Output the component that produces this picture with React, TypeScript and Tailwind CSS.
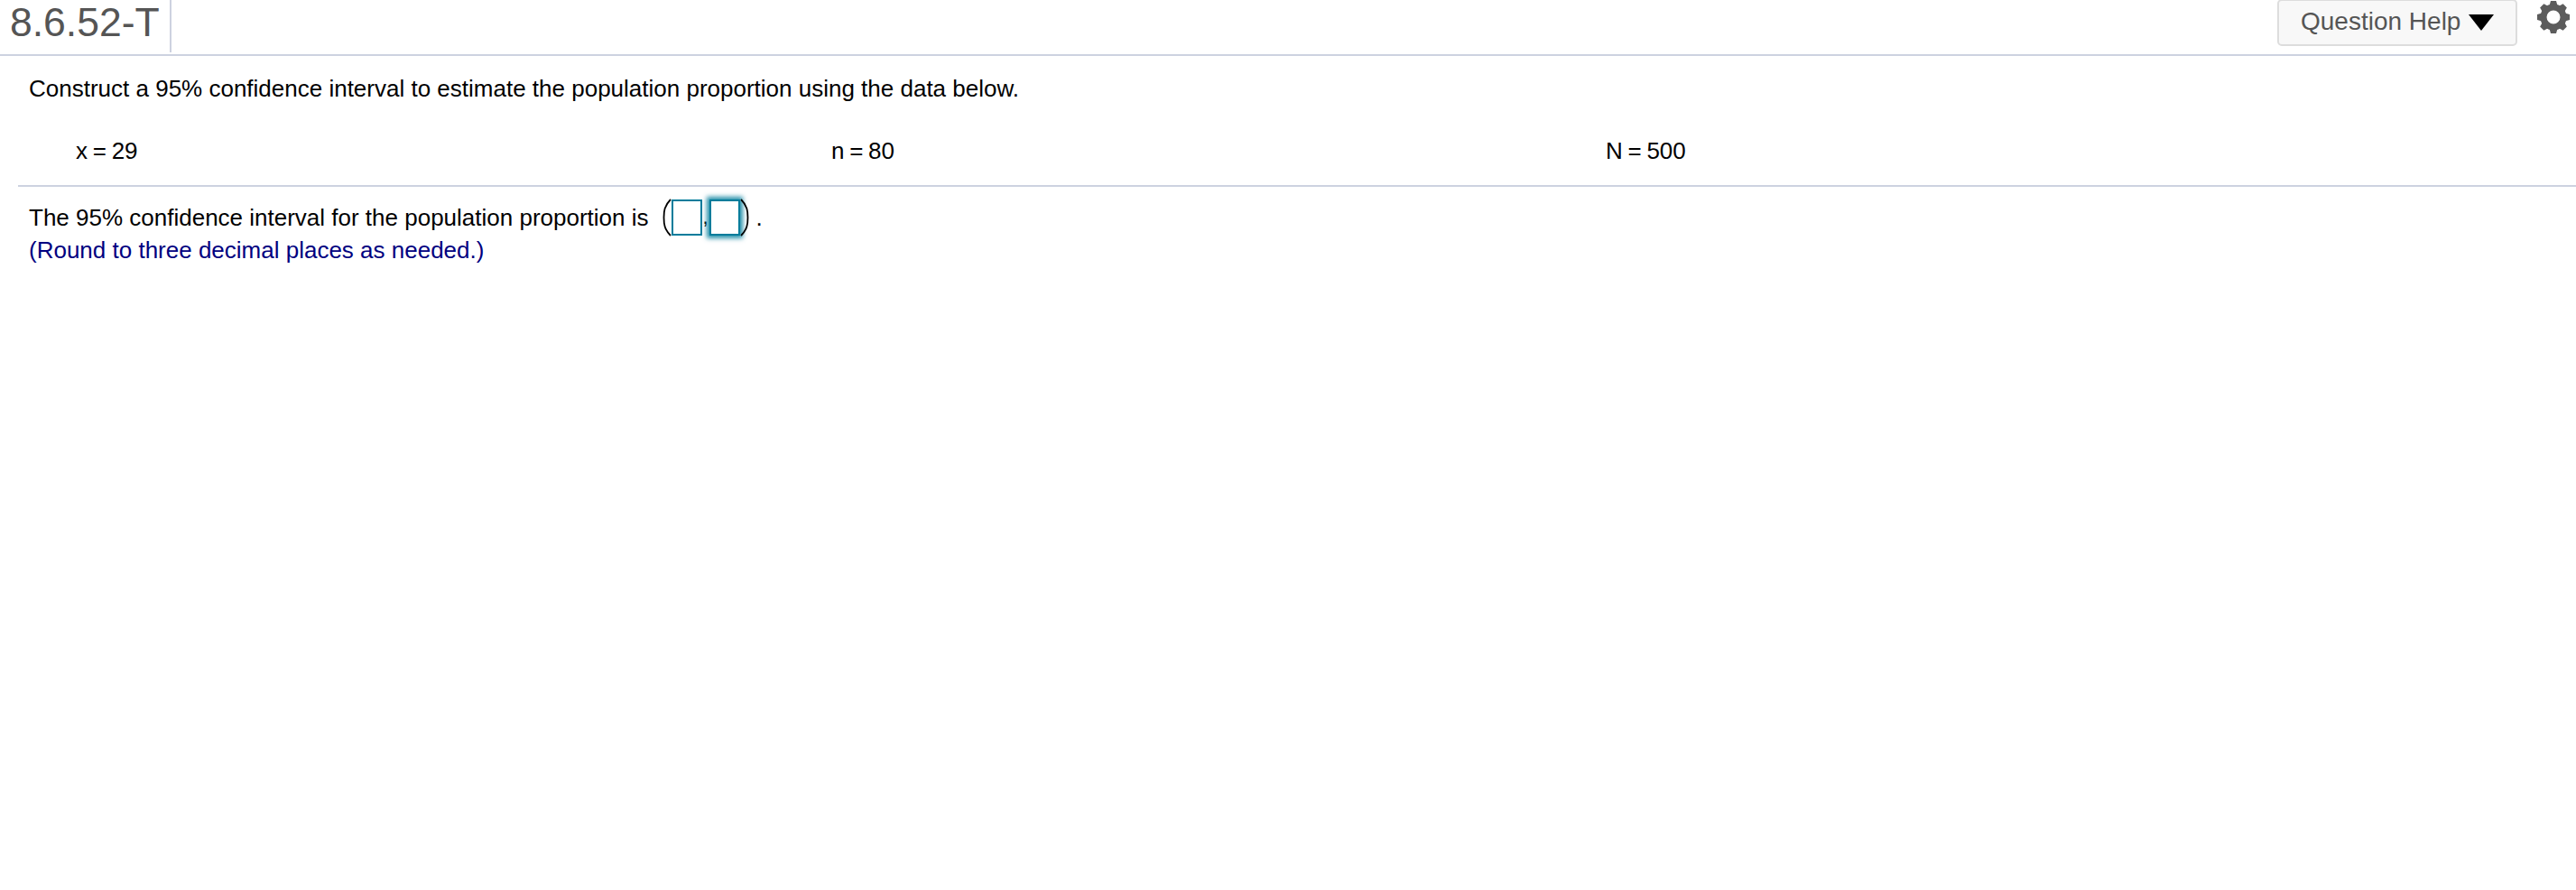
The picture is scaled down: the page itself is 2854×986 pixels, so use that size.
const font = "font-['Liberation_Sans',Arial,sans-serif]";

function GearIcon() {
  const teeth = [0, 45, 90, 135, 180, 225, 270, 315];
  return (
    <svg width="38" height="38" viewBox="0 0 38 38" className="block">
      {teeth.map((a) => (
        <path key={a} d="M14 8 L16 1 H22 L24 8 Z" fill="#5c5c5c" transform={`rotate(${a} 19 19)`} />
      ))}
      <circle cx="19" cy="19" r="11" fill="none" stroke="#5c5c5c" strokeWidth="7" />
    </svg>
  );
}

function Paren({ flip }: { flip?: boolean }) {
  return (
    <svg width="10" height="42" viewBox="0 0 10 42" className={flip ? "block -scale-x-100" : "block"}>
      <path d="M9 1 C2 8 1.5 14 1.5 21 C1.5 28 2 34 9 41" fill="none" stroke="#000000" strokeWidth="1.8" />
    </svg>
  );
}

function AnswerBox({ focused }: { focused?: boolean }) {
  return (
    <span
      className={`inline-block w-[34px] h-[40px] border-[2px] border-[#007c9b] bg-white ${
        focused ? "shadow-[0_0_5px_3px_rgba(0,124,155,0.85)]" : ""
      }`}
    />
  );
}

export default function App() {
  return (
    <div className={`${font} w-[2854px] h-[986px] bg-white text-black overflow-hidden`}>
      <header className="flex justify-between h-[62px] border-b-2 border-[#cdd2e0]">
        <div className="h-[58px] w-[190px] border-r-2 border-[#cdd2e0] pl-[11px] text-[44.5px] leading-[50px] text-[#555555]">
          8.6.52-T
        </div>
        <div className="flex items-start">
          <button className="flex items-center gap-[9px] h-[52px] w-[266px] pl-[24px] pb-[3px] -mt-[1px] border-2 border-[#dddddd] rounded-[5px] bg-[#f8f8f8] text-[28px] text-[#555555]">
            Question Help
            <span className="w-0 h-0 mt-[3px] border-x-[14px] border-x-transparent border-t-[18px] border-t-black" />
          </button>
          <div className="ml-[21px] mr-[6px]">
            <GearIcon />
          </div>
        </div>
      </header>

      <main className="text-[26px] leading-[36px]">
        <p className="pl-[32px] pt-[18px]">Construct a 95% confidence interval to estimate the population proportion using the data below.</p>

        <div className="flex pl-[66px] pt-[33px] pb-[20px] ml-[18px] [word-spacing:-1.5px]">
          <span className="w-[837px]">x = 29</span>
          <span className="w-[858px]">n = 80</span>
          <span>N = 500</span>
        </div>

        <div className="ml-[20px] border-t-2 border-[#cdd2e0]" />

        <div className="pl-[32px] pt-[14px]">
          <div className="flex items-center h-[40px]">
            <span>The 95% confidence interval for the population proportion is</span>
            <span className="flex items-center ml-[15px] h-[40px]">
              <Paren />
              <AnswerBox />
              <span className="w-[8px] text-[22px] leading-[40px] text-center">,</span>
              <AnswerBox focused />
              <Paren flip />
            </span>
            <span className="ml-[8px]">.</span>
          </div>
          <p className="text-[#000080] -mt-[2px]">(Round to three decimal places as needed.)</p>
        </div>
      </main>
    </div>
  );
}
